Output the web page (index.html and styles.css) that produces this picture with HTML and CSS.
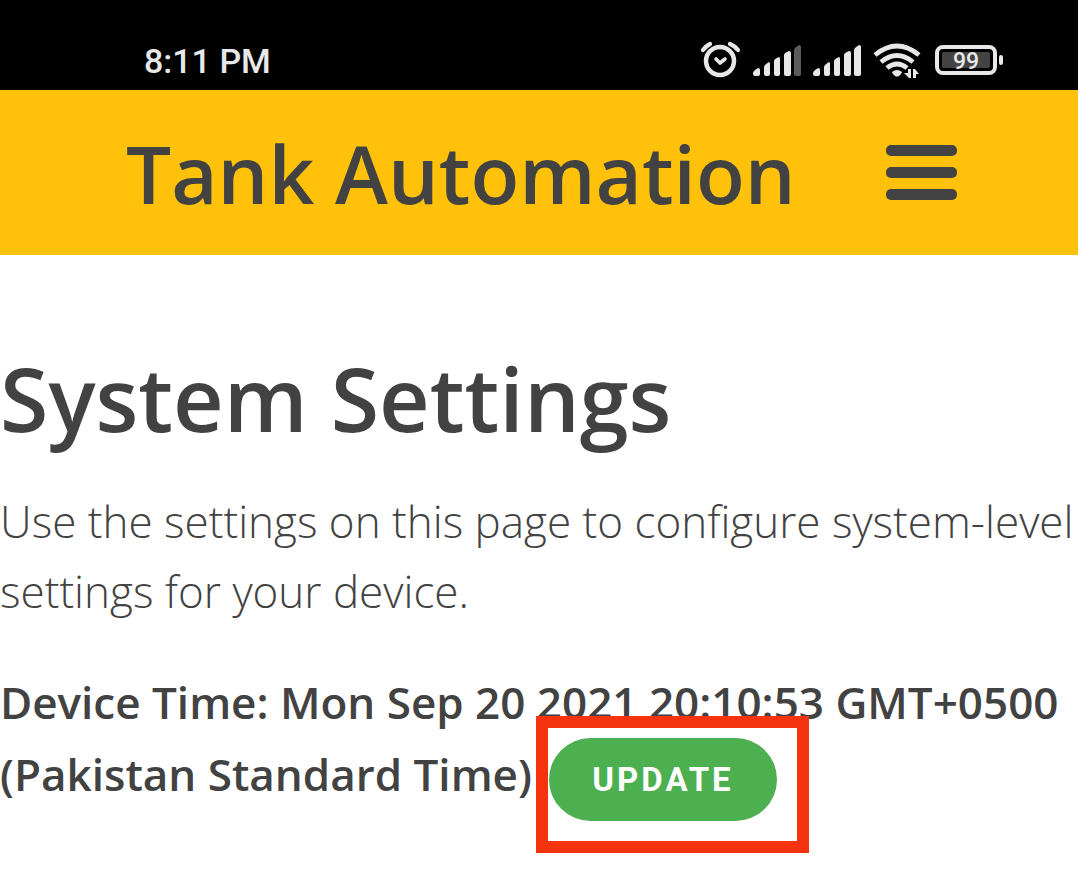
FILE: index.html
```html
<!DOCTYPE html>
<html lang="en">
<head>
<meta charset="utf-8">
<meta name="viewport" content="width=device-width">
<title>Tank Automation</title>
<link rel="stylesheet" href="styles.css">
</head>
<body>
<div class="status">
  <span class="clock">8:11 PM</span>
  <svg class="status-icons" viewBox="0 0 304 40" aria-hidden="true">
    <g fill="none" stroke="#e8e8e8" stroke-linecap="round" stroke-linejoin="round">
      <circle cx="20" cy="21" r="14" stroke-width="4.5"/>
      <path d="M16 19l4 4 5-4" stroke-width="3.6"/>
      <path d="M3 10Q6 6 10 4M30 4q5 2 8 6" stroke-width="4.2"/>
    </g>
    <g fill="#e8e8e8">
      <path d="M53 33q0-2 5-5 2 0 2 2v4q0 2-2 2h-3q-2 0-2-2z"/>
      <path d="M64 27q0-2 5-5 1 0 1 2v10q0 2-2 2h-2q-2 0-2-2z"/>
      <path d="M74 21q0-2 5-4 1 0 1 2v15q0 2-2 2h-2q-2 0-2-2z"/>
      <path d="M84 15q0-2 5-4 2 0 2 2v21q0 2-2 2h-3q-2 0-2-2z"/>
      <path fill="#5b5b5b" d="M94 10q0-2 5-5 2 0 2 2v27q0 2-2 2h-3q-2 0-2-2z"/>
      <path d="M113 33q0-2 5-5 2 0 2 2v4q0 2-2 2h-3q-2 0-2-2z"/>
      <path d="M124 27q0-2 5-5 1 0 1 2v10q0 2-2 2h-2q-2 0-2-2z"/>
      <path d="M134 21q0-2 5-4 1 0 1 2v15q0 2-2 2h-2q-2 0-2-2z"/>
      <path d="M144 15q0-2 5-4 2 0 2 2v21q0 2-2 2h-3q-2 0-2-2z"/>
      <path d="M154 10q0-2 5-5 2 0 2 2v27q0 2-2 2h-3q-2 0-2-2z"/>
      <path d="M192 32q5-4 10 0 0 1-3 4-2 1-4 0-3-3-3-4z"/>
      <path d="M208 29h3v9h-2l-5-5h4zM213 38v-9h2l4 5h-3v4z"/>
    </g>
    <g fill="none" stroke="#e8e8e8" stroke-width="4.8">
      <path d="M175 15Q197-3 219 15M181 22q16-13 32 0M187 28q10-8 20 0"/>
    </g>
    <rect x="237" y="7" width="58" height="26" rx="6" fill="none" stroke="#e8e8e8" stroke-width="4"/>
    <rect x="242" y="12" width="48" height="16" rx="2" fill="#434343"/>
    <rect x="299" y="15" width="4" height="10" rx="2" fill="#e8e8e8"/>
    <text class="battery-level" x="266" y="29" text-anchor="middle">99</text>
  </svg>
</div>
<header class="topbar">
  <div class="brand">Tank Automation</div>
  <button class="menu" type="button" aria-label="Menu"><span></span><span></span><span></span></button>
</header>
<main class="content">
  <h1>System Settings</h1>
  <p class="intro">Use the settings on this page to configure system-level settings for your device.</p>
  <p class="time">Device Time: Mon Sep 20 2021 20:10:53 GMT+0500 (Pakistan Standard Time) <span class="action"><button class="update" type="button">UPDATE</button><span class="highlight"></span></span></p>
</main>
</body>
</html>
```
FILE: styles.css
```css
* { box-sizing: border-box; }
body {
  margin: 0;
  background: #fff;
  color: #424242;
  font-family: "Open Sans", sans-serif;
}
.status {
  display: flex;
  justify-content: space-between;
  align-items: flex-end;
  height: 90px;
  padding: 0 74px 10px 144px;
  background: #000;
  color: #e8e8e8;
}
.clock {
  font: 500 34px/38px Roboto, sans-serif;
}
.status-icons {
  width: 304px;
  height: 40px;
}
.battery-level {
  font: 500 23px Roboto, sans-serif;
  fill: #e8e8e8;
}
.topbar {
  display: flex;
  justify-content: space-between;
  align-items: center;
  height: 165px;
  padding: 0 121px 0 126px;
  background: #ffc10a;
}
.brand {
  font-size: 80px;
  font-weight: 600;
  line-height: 100px;
}
.menu {
  display: flex;
  flex-direction: column;
  gap: 11px;
  padding: 0;
  border: 0;
  background: none;
}
.menu span {
  width: 71px;
  height: 11px;
  border-radius: 5px;
  background: #424242;
}
.content { padding: 93px 0 60px; }
h1 {
  margin: 0;
  font-size: 88px;
  font-weight: 600;
  line-height: 100px;
}
.intro {
  margin: 38px 0 0;
  font-size: 44px;
  font-weight: 300;
  line-height: 70px;
}
.time {
  margin: 40px 0 0;
  font-size: 44px;
  font-weight: 600;
  line-height: 72px;
}
.action {
  display: inline-block;
  position: relative;
  margin-left: 6px;
  vertical-align: middle;
}
.update {
  display: block;
  padding: 0 43px;
  border: 0;
  border-radius: 42px;
  background: #4caf50;
  color: #fff;
  font: 700 33px/83px Roboto, sans-serif;
  letter-spacing: 3px;
}
.highlight {
  position: absolute;
  inset: -22px -32px -32px -13px;
  border: 12px solid #f5330f;
  pointer-events: none;
}
```
